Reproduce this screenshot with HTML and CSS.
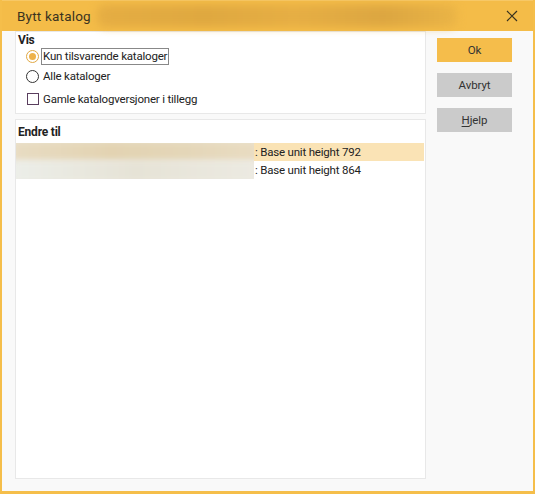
FILE: index.html
```html
<!DOCTYPE html>
<html>
<head>
<meta charset="utf-8">
<link rel="stylesheet" href="styles.css">
</head>
<body>
<div class="window">
  <div class="titlebar">
    <span class="title">Bytt katalog</span>
    <div class="title-blur"></div>
    <button class="close" aria-label="Lukk">
      <svg width="12" height="12" viewBox="0 0 12 12"><path d="M1 1 L11 11 M11 1 L1 11" stroke="#3a3320" stroke-width="1.2" fill="none"/></svg>
    </button>
  </div>
  <div class="client">
    <div class="main">
      <div class="panel panel-vis">
        <div class="panel-title">Vis</div>
        <label class="opt opt-first">
          <span class="radio checked"><span class="dot"></span></span>
          <span class="focus">Kun tilsvarende kataloger</span>
        </label>
        <label class="opt opt-second">
          <span class="radio"></span>
          <span class="lbl">Alle kataloger</span>
        </label>
        <label class="opt opt-check">
          <span class="check"></span>
          <span class="lbl">Gamle katalogversjoner i tillegg</span>
        </label>
      </div>
      <div class="panel panel-list">
        <div class="panel-title list-title">Endre til</div>
        <div class="list">
          <div class="blurcell"><div class="blur-a"></div><div class="blur-b"></div></div>
          <div class="item selected">: Base unit height 792</div>
          <div class="item">: Base unit height 864</div>
        </div>
      </div>
    </div>
    <div class="buttons">
      <button class="btn btn-ok">Ok</button>
      <button class="btn">Avbryt</button>
      <button class="btn"><u>H</u>jelp</button>
    </div>
  </div>
</div>
</body>
</html>
```

FILE: styles.css
```css
* { box-sizing: border-box; }
html, body { margin: 0; padding: 0; }
body {
  width: 535px;
  height: 494px;
  font-family: Roboto, "Noto Sans", sans-serif;
  font-size: 11.5px;
  letter-spacing: -0.2px;
  color: #222;
  overflow: hidden;
}
.window {
  width: 535px;
  height: 494px;
  border: 2px solid #f5be4a;
  border-top: 0;
  border-bottom-width: 3px;
  display: flex;
  flex-direction: column;
  background: #f9f9f9;
}
.titlebar {
  height: 31px;
  flex: none;
  background: #f4bc48;
  border-top: 1px solid #f7c866;
  display: flex;
  align-items: center;
  padding-left: 15px;
}
.title {
  font-size: 13.5px;
  color: #3a3320;
  letter-spacing: 0.2px;
}
.title-blur {
  flex: 1;
  height: 22px;
  margin: 0 40px 0 6px;
  background: linear-gradient(90deg, #e5ad43, #dfa840 30%, #e6ae44 55%, #dca641 80%, #eab446);
  filter: blur(4px);
  border-radius: 8px;
}
.close {
  width: 30px;
  height: 28px;
  border: 0;
  padding: 0;
  background: transparent;
  display: flex;
  align-items: center;
  justify-content: center;
  margin-right: 6px;
}
.client {
  flex: 1;
  display: flex;
  padding: 0 20px 12px 13px;
}
.main {
  width: 411px;
  display: flex;
  flex-direction: column;
  gap: 5px;
}
.panel {
  background: #fff;
  border: 1px solid #e8e8e8;
}
.panel-vis {
  height: 83px;
  padding: 1px 0 0 2px;
}
.panel-list {
  flex: 1;
}
.panel-title {
  font-weight: bold;
  font-size: 12px;
  line-height: 14px;
  height: 14px;
  color: #222;
}
.opt {
  display: flex;
  align-items: center;
  height: 18px;
  padding-left: 8px;
}
.opt-first { margin-top: 0; }
.opt-second { margin-top: 2px; }
.opt-check { margin-top: 5px; }
.radio {
  width: 13px;
  height: 13px;
  border: 1px solid #333;
  border-radius: 50%;
  flex: none;
  display: flex;
  align-items: center;
  justify-content: center;
  margin-right: 2px;
  background: #fff;
}
.radio.checked {
  border-color: #e0a844;
}
.dot {
  width: 7px;
  height: 7px;
  border-radius: 50%;
  background: #eeb24a;
}
.check {
  width: 12px;
  height: 12px;
  border: 1px solid #5a3e5e;
  flex: none;
  margin: 0 2px 0 1px;
  background: #fff;
}
.focus {
  border: 1px solid #888;
  padding: 0 1px;
  line-height: 15px;
}
.lbl { padding-left: 2px; }
.list-title {
  padding: 5px 0 0 2px;
  height: 23px;
  line-height: 14px;
}
.list {
  display: grid;
  grid-template-columns: 238px 170px;
  grid-template-rows: 18px 18px;
  margin-left: 0;
}
.blurcell {
  grid-row: 1 / 3;
  grid-column: 1;
  overflow: hidden;
  display: flex;
  flex-direction: column;
  background: #eeeae0;
}
.blur-a {
  height: 20px;
  background: linear-gradient(90deg, #e8dcc3, #e3d3b2 40%, #e4d6b8 70%, #e9dcc2);
  filter: blur(3px);
  margin: -2px -4px 0 -4px;
}
.blur-b {
  flex: 1;
  background: linear-gradient(90deg, #eceee9, #e6e3d6 50%, #eceae2);
  filter: blur(3px);
  margin: 0 -4px -3px -4px;
}
.item {
  grid-column: 2;
  line-height: 18px;
  padding-left: 1px;
  color: #222;
  white-space: nowrap;
}
.item.selected { background: #fae3b5; }
.buttons {
  margin-left: 11px;
  padding-top: 7px;
  display: flex;
  flex-direction: column;
  gap: 11px;
}
.btn {
  width: 75px;
  height: 24px;
  border: 0;
  background: #cbcbcb;
  font-family: Roboto, "Noto Sans", sans-serif;
  font-size: 11.5px;
  letter-spacing: -0.1px;
  color: #333;
  padding: 0;
}
.btn-ok { background: #f5bd4b; }
.btn u { text-decoration: underline; text-underline-offset: 2px; }
```
